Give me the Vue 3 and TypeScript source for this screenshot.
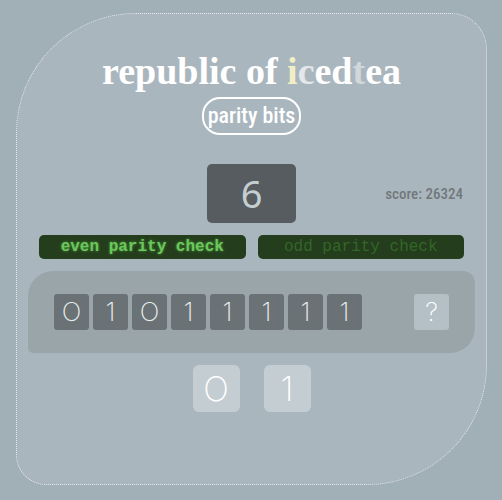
<script setup lang="ts">
import { ref } from 'vue'

type Parity = 'even' | 'odd'
type Bit = 0 | 1

const parity = ref<Parity>('even')
const bits = ref<Bit[]>([0, 1, 0, 1, 1, 1, 1, 1])
const answer = ref<Bit | null>(null)
const remaining = ref<number>(6)
const score = ref<number>(26324)
const choices: Bit[] = [0, 1]
const modes: Parity[] = ['even', 'odd']

// Zero is shown as a fully round figure.
const face = (bit: Bit | null): string => (bit === null ? '?' : bit === 0 ? 'O' : '1')
</script>

<template>
  <main class="page">
    <section class="card">
      <h1 class="title">republic of <span class="lemon">i</span><span class="ice">c</span>ed<span class="mist">t</span>ea</h1>
      <h2 class="pill">parity bits</h2>

      <div class="status">
        <div class="counter">{{ remaining }}</div>
        <p class="score">score: {{ score }}</p>
      </div>

      <div class="modes">
        <button
          v-for="mode in modes"
          :key="mode"
          type="button"
          class="mode"
          :class="{ lit: parity === mode }"
          @click="parity = mode"
        >{{ mode }} parity check</button>
      </div>

      <div class="board">
        <div class="bits">
          <span v-for="(bit, i) in bits" :key="i" class="bit">{{ face(bit) }}</span>
        </div>
        <span class="bit unknown">{{ face(answer) }}</span>
      </div>

      <div class="choices">
        <button
          v-for="bit in choices"
          :key="bit"
          type="button"
          class="choice"
          @click="answer = bit"
        >{{ face(bit) }}</button>
      </div>
    </section>
  </main>
</template>

<style>
body {
  margin: 0;
  background: #a1afb6;
}
</style>

<style scoped>
* {
  box-sizing: border-box;
}
.page {
  display: flex;
  min-height: 100vh;
  padding: 13px 15px 15px 16px;
  background: #a1afb6;
}
.card {
  display: flex;
  flex: 1;
  flex-direction: column;
  align-items: center;
  padding: 35px 11px 24px;
  border: 1px dotted #e4e9eb;
  border-radius: 120px 36px 120px 30px;
  background: #aab6be;
}
.title {
  margin: 0;
  color: #fff;
  font: 700 38px/44px "Liberation Serif", serif;
  white-space: nowrap;
}
.lemon {
  color: #f1edc4;
}
.ice {
  color: #e4e8eb;
}
.mist {
  color: #d1d8dc;
}
.pill {
  margin: 4px 0 0;
  padding: 0 4px;
  border: 2px solid #fff;
  border-radius: 18px;
  color: #fff;
  font: 500 22px/34px "Roboto Condensed", Roboto, sans-serif;
  white-space: nowrap;
}
.status {
  display: grid;
  grid-template-columns: 1fr 89px 1fr;
  align-items: center;
  align-self: stretch;
  margin-top: 29px;
  padding: 0 12px;
}
.counter {
  grid-column: 2;
  border-radius: 5px;
  background: #575c60;
  color: #c5ced1;
  font: 400 38px/59px "Noto Sans", sans-serif;
  text-align: center;
}
.score {
  margin: 0;
  color: #70787c;
  font: 500 15px/24px "Roboto Condensed", Roboto, sans-serif;
  text-align: right;
  white-space: nowrap;
}
.modes {
  display: grid;
  grid-template-columns: 1fr 1fr;
  gap: 12px;
  align-self: stretch;
  margin-top: 12px;
  padding: 0 11px;
}
.mode {
  padding: 0;
  border: 0;
  border-radius: 5px;
  background: #243d1c;
  color: #336629;
  font: 400 16px/24px "Liberation Mono", monospace;
  white-space: nowrap;
}
.mode.lit {
  color: #6cc75c;
  font-weight: 700;
  text-shadow: 0 0 3px #4c9a3f;
}
.board {
  display: flex;
  align-items: center;
  justify-content: space-between;
  align-self: stretch;
  margin-top: 12px;
  padding: 23px 26px;
  border-radius: 25px 12px 25px 5px;
  background: #9aa5aa;
}
.bits {
  display: flex;
  gap: 4px;
}
.bit {
  width: 35px;
  border-radius: 3px;
  background: #6a7275;
  color: #e8edef;
  font: 200 26px/36px Inter, sans-serif;
  text-align: center;
}
.unknown {
  background: #b5bfc6;
  color: #fff;
}
.choices {
  display: flex;
  gap: 24px;
  margin-top: 12px;
}
.choice {
  width: 47px;
  padding: 0;
  border: 0;
  border-radius: 6px;
  background: #c4cdd2;
  color: #fff;
  font: 200 34px/47px Inter, sans-serif;
}
</style>
